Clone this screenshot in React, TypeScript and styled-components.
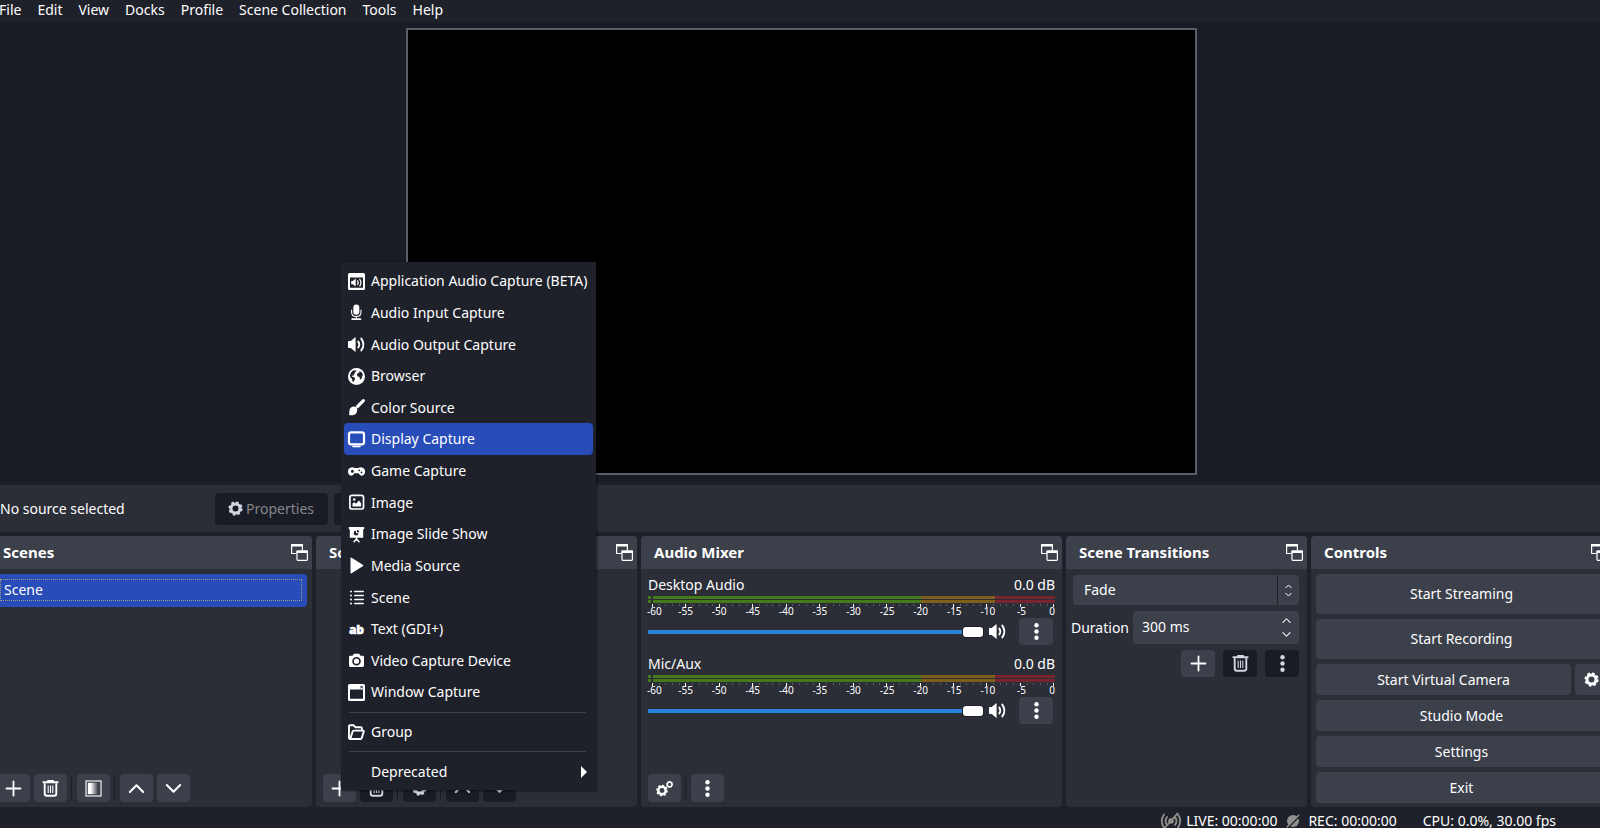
import React from "react";
import styled, { createGlobalStyle, css } from "styled-components";

const color = {
  window: "#1f212a",
  panel: "#2b2d37",
  raised: "#3c404b",
  sunken: "#191b25",
  accent: "#284cb8",
  slider: "#2a82da",
  text: "#fefefe",
  muted: "#86868a",
  outline: "#5b5d69",
};

const GlobalStyle = createGlobalStyle`
  *, *::before, *::after { box-sizing: border-box; }
  body {
    margin: 0;
    overflow: hidden;
    background: ${color.window};
    color: ${color.text};
    font-family: "Noto Sans", "Open Sans", sans-serif;
    font-size: 14px;
    line-height: 20px;
  }
  button, input, select { font: inherit; color: inherit; border: 0; margin: 0; padding: 0; }
  ul { list-style: none; margin: 0; padding: 0; }
  h2, p { margin: 0; }
`;

/* ---------- icons ---------- */

const Glyph = styled.svg<{ $size?: number }>`
  display: block;
  flex: none;
  width: ${(p) => p.$size ?? 17}px;
  height: ${(p) => p.$size ?? 17}px;
  overflow: visible;
`;

type IconProps = { size?: number; tint?: string };

const Icon = ({ size, tint = "#fff", children }: IconProps & { children: React.ReactNode }) => (
  <Glyph $size={size} viewBox="0 0 17 17" fill={tint} stroke={tint} strokeWidth="0" aria-hidden="true">
    {children}
  </Glyph>
);

const Line = ({ d, w = 2 }: { d: string; w?: number }) => (
  <path d={d} fill="none" strokeWidth={w} strokeLinecap="round" strokeLinejoin="round" />
);

const Cog = ({ x, y, r }: { x: number; y: number; r: number }) => (
  <g fill="none">
    <circle cx={x} cy={y} r={r * 0.64} strokeWidth={r * 0.42} />
    <circle cx={x} cy={y} r={r * 0.88} strokeWidth={r * 0.26} pathLength={16} strokeDasharray="1.1 0.9" />
  </g>
);

const GearIcon = (p: IconProps) => <Icon {...p}><Cog x={8.5} y={8.5} r={8} /></Icon>;
const GearsIcon = (p: IconProps) => (
  <Icon {...p}>
    <Cog x={6} y={10.5} r={5.8} />
    <Cog x={13.6} y={4.4} r={3.6} />
  </Icon>
);
const PlusIcon = (p: IconProps) => <Icon {...p}><Line d="M8.500 1.500v14M1.500 8.500h14" w={1.8} /></Icon>;
const UpIcon = (p: IconProps) => <Icon {...p}><Line d="M1.800 12 8.500 5.200 15.200 12" w={2} /></Icon>;
const DownIcon = (p: IconProps) => <Icon {...p}><Line d="M1.800 5 8.500 11.800 15.200 5" w={2} /></Icon>;
const DotsIcon = (p: IconProps) => (
  <Icon {...p}>
    <circle cx="8.500" cy="2.200" r="2.200" />
    <circle cx="8.500" cy="8.500" r="2.200" />
    <circle cx="8.500" cy="14.800" r="2.200" />
  </Icon>
);
const TrashIcon = (p: IconProps) => (
  <Icon {...p}>
    <rect x="0.500" y="1.200" width="16" height="2" rx="0.600" />
    <rect x="5" y="0" width="7" height="2" rx="0.800" />
    <Line d="M2.700 4v9.500q0 2.300 2.300 2.300h7q2.300 0 2.300-2.300V4" w={1.900} />
    <path d="M6.200 5.500v7.500M8.500 5.500v7.500M10.800 5.500v7.500" fill="none" strokeWidth="1.100" />
  </Icon>
);
const FadeIcon = (p: IconProps) => (
  <Icon {...p}>
    <defs>
      <linearGradient id="fade">
        <stop offset="0" stopColor="#fff" />
        <stop offset="0.250" stopColor="#fff" />
        <stop offset="0.900" stopColor="#3c404b" />
      </linearGradient>
    </defs>
    <rect x="1" y="1" width="15" height="15" fill="none" strokeWidth="1.100" />
    <rect x="2.800" y="2.800" width="11.400" height="11.400" fill="url(#fade)" />
  </Icon>
);
const PopOutIcon = (p: IconProps) => (
  <Icon {...p}>
    <path d="M5.500 9.500H1.200q-.6 0-.6-.6V1.200h10.800v5" fill="none" strokeWidth="1.200" />
    <rect x="0" y="0" width="12" height="2.400" rx="0.500" />
    <rect x="6" y="7.200" width="10.400" height="9.200" rx="0.800" fill="none" strokeWidth="1.200" />
    <rect x="5.400" y="6.600" width="11.600" height="2.400" rx="0.500" />
  </Icon>
);
const VolumeIcon = (p: IconProps) => (
  <Icon {...p}>
    <path d="M0 5.800q0-.8.800-.8h1.900L7.600.9v15.200L2.700 12H.8q-.8 0-.8-.8z" />
    <Line d="M10.300 5.600q2 2.900 0 5.800M13.300 2.600q4.200 5.900 0 11.800" w={1.900} />
  </Icon>
);
const AppAudioIcon = () => (
  <Icon>
    <path fillRule="evenodd" d="M1.500 0h14q1.500 0 1.500 1.500v14q0 1.500-1.500 1.500h-14Q0 17 0 15.500v-14Q0 0 1.500 0zM2 4.500v10.300h13V4.500z" />
    <path d="M3.200 8h1.600l2.900-2.400v8L4.800 11.300H3.200z" />
    <Line d="M9.600 7.800q1.200 1.800 0 3.700M11.800 6.300q2.300 3.300 0 6.600" w={1.200} />
  </Icon>
);
const MicIcon = () => (
  <Icon>
    <rect x="5.300" y="0.400" width="6" height="10.400" rx="3" />
    <Line d="M3.600 6v2.200q0 4.300 4.700 4.300T13 8.200V6M8.300 12.500v2" w={1.100} />
    <rect x="3.300" y="14.200" width="10" height="1.900" rx="0.800" />
  </Icon>
);
const GlobeIcon = () => (
  <Icon>
    <circle cx="8.500" cy="8.500" r="8.500" />
    <path
      fill={color.window}
      d="M5 2.600 8.700 2.200 8 3.600 6.800 4 7.300 5 5.700 6.200 6.200 7.500 4.200 7.400 3.800 8.600 6 9.200 7.300 10.500 6.300 12.200 5.600 14.200 4.300 12.800 4 10.700 2.300 9.300 2 7 3.200 4.300zM9.300 5.600 11.500 4.600 11.200 3 13.600 4.200 15 6.800 14.300 7.900 13.800 10 12.600 11.800 11.700 10.600 11.600 9 9.800 8.600 9 7z"
    />
  </Icon>
);
const BrushIcon = () => (
  <Icon>
    <Line d="M9.400 7.600 15.400 1.600" w={3.200} />
    <path d="M5.300 7.600q3.900 0 4 3.700-.5 4.400-4.700 4.900-2 .2-3.600-.2.300-.9.300-3.400.3-4.600 4-5z" />
  </Icon>
);
const DisplayIcon = () => (
  <Icon>
    <rect x="1" y="1.400" width="15" height="12" rx="2.200" fill="none" strokeWidth="2.200" />
    <rect x="4.200" y="14.800" width="8.600" height="1.500" rx="0.700" />
  </Icon>
);
const GamepadIcon = () => (
  <Icon>
    <path
      fillRule="evenodd"
      d="M4.200 4.200q1.600 0 2.300.8h4q.7-.8 2.300-.8Q17 4.500 17 8.600t-3.400 4.100q-1.800 0-3-2.400H6.400q-1.200 2.400-3 2.400Q0 12.700 0 8.600t4.200-4.400zM4.400 6.800a1.500 1.500 0 1 0 0 3 1.500 1.500 0 0 0 0-3zM11.300 6.400a.9.9 0 1 0 0 1.800.9.9 0 0 0 0-1.800zM13.500 8.600a.9.900 0 1 0 0 1.800.9.900 0 0 0 0-1.800z"
    />
  </Icon>
);
const ImageIcon = () => (
  <Icon>
    <rect x="1.900" y="1.400" width="13.600" height="13.600" rx="2" fill="none" strokeWidth="1.700" />
    <circle cx="6.200" cy="5.500" r="1.200" />
    <path d="M4.500 12.400V9.600l1.900-1.300 1.600 1.500 2.900-3.300 2.200 2.800v3.100z" />
  </Icon>
);
const SlidesIcon = () => (
  <Icon>
    <path d="M.8 1h15.400v2.200h-1v8.600H1.800V3.200h-1z" />
    <path d="M8 4.600a2.500 2.500 0 1 0 2.600 2.700H8z" fill={color.window} />
    <path d="M9 3.900a2.200 2.200 0 0 1 2.300 2.300H9z" fill={color.window} />
    <Line d="M8.500 11.500v2.500M8.500 13 6 15.800M8.500 13l2.500 2.800" w={1.500} />
  </Icon>
);
const PlayIcon = () => (
  <Icon><path d="M2.500 1.400q0-1.200 1.100-.6l11.200 7q1 .7 0 1.400l-11.200 7q-1.100.6-1.100-.6z" /></Icon>
);
const ListIcon = () => (
  <Icon>
    {[2.5, 6.5, 10.5, 14.5].map((y) => (
      <React.Fragment key={y}>
        <circle cx="3" cy={y} r="1" />
        <rect x="6" y={y - 0.8} width="10" height="1.600" rx="0.800" />
      </React.Fragment>
    ))}
  </Icon>
);
const LettersIcon = () => (
  <Icon>
    <text x="8.500" y="12.500" textAnchor="middle" fontSize="12" fontWeight="800" fontFamily="Open Sans, sans-serif" strokeWidth="0.500">ab</text>
  </Icon>
);
const CameraIcon = () => (
  <Icon>
    <path
      fillRule="evenodd"
      d="M5.800 1.800h5.400l1.200 2h2.200q1.400 0 1.400 1.400v8.400q0 1.400-1.400 1.400H2.400Q1 15 1 13.600V5.200q0-1.400 1.400-1.400h2.200zM8.500 4.900a4.300 4.300 0 1 0 0 8.600 4.300 4.300 0 0 0 0-8.600z"
    />
    <circle cx="8.500" cy="9.200" r="2.600" />
  </Icon>
);
const WindowIcon = () => (
  <Icon>
    <path fillRule="evenodd" d="M1.500 0h14q1.500 0 1.500 1.500v14q0 1.500-1.500 1.500h-14Q0 17 0 15.500v-14Q0 0 1.500 0zM2 5.500v9.300h13V5.500z" />
    <path d="M12.300 1.800l2.600 2.600M14.900 1.800l-2.600 2.600" stroke={color.window} strokeWidth="1" />
  </Icon>
);
const FolderIcon = () => (
  <Icon>
    <Line d="M2.300 15q-1.300 0-1.300-1.300V2.500q0-1.300 1.300-1.300h3.200l1.800 2h5.400q1.200 0 1.200 1.300v1.400" w={1.900} />
    <Line d="M2.300 15 4.600 7.500q.3-.9 1.200-.9h9q1.300 0 .9 1.200l-1.900 6.100q-.3 1.100-1.500 1.100z" w={1.900} />
  </Icon>
);
const OffAirIcon = () => (
  <Glyph $size={20} viewBox="0 0 20 20" fill="none" stroke="#8f8f8c" strokeWidth="1.800" strokeLinecap="round" aria-hidden="true">
    <circle cx="10" cy="10" r="2.800" fill="#8f8f8c" strokeWidth="0" />
    <path d="M3 3.500q-4.500 6.500 0 13M17 3.500q4.500 6.500 0 13M6 6q-3 4 0 8M14 6q3 4 0 8M4.500 16 16.500 2.500" />
  </Glyph>
);
const NotRecordingIcon = () => (
  <Glyph $size={14} viewBox="0 0 14 14" aria-hidden="true">
    <circle cx="7" cy="7" r="6" fill="#8f8f8c" />
    <path d="M1.500 14 14 1.500" stroke={color.window} strokeWidth="1.800" />
    <path d="M.8 13.200 13.200.8" stroke="#8f8f8c" strokeWidth="1.500" />
  </Glyph>
);

/* ---------- shell ---------- */

/* The main window is a little wider than the screen on both sides. */
const Shell = styled.main`
  display: flex;
  flex-direction: column;
  height: 100vh;
  margin: 0 -12px 0 -10px;
  overflow: hidden;
`;

const MenuBar = styled.nav`
  display: flex;
  gap: 16px;
  height: 22px;
  padding-left: 9px;
`;

const MenuBarItem = styled.button`
  background: none;
  line-height: 20px;
  height: 20px;
`;

const Preview = styled.section`
  flex: 1;
  min-height: 0;
  display: flex;
  justify-content: center;
  padding: 6px 0 7px;
  background: ${color.sunken};
`;

const Canvas = styled.div`
  height: 100%;
  aspect-ratio: 791 / 447;
  background: #000;
  border: 2px solid ${color.outline};
`;

const ContextBar = styled.section`
  display: flex;
  align-items: center;
  gap: 6px;
  height: 47px;
  margin: 3px 0 4px;
  padding-left: 10px;
  background: ${color.panel};
`;

const ContextLabel = styled.p`
  width: 209px;
`;

const ContextButton = styled.button`
  display: flex;
  align-items: center;
  justify-content: center;
  gap: 3px;
  min-width: 92px;
  height: 32px;
  padding: 0 14px 0 13px;
  border-radius: 4px;
  background: ${color.sunken};
  color: ${color.muted};
`;

/* ---------- docks ---------- */

const Docks = styled.div`
  display: grid;
  grid-template-columns:
    minmax(0, 322fr) minmax(0, 321fr) minmax(0, 421fr) minmax(0, 241fr)
    minmax(0, 301fr);
  gap: 4px;
`;

const DockFrame = styled.section`
  position: relative;
  display: flex;
  flex-direction: column;
  border-radius: 4px;
  background: ${color.panel};
`;

const DockHeader = styled.header`
  display: flex;
  align-items: center;
  justify-content: space-between;
  height: 33px;
  padding: 0 4px 0 13px;
  border-radius: 4px 4px 0 0;
  background: ${color.raised};
`;

const DockTitle = styled.h2`
  padding-bottom: 2px;
  font-size: 15px;
  line-height: 20px;
  font-weight: 700;
`;

const BareButton = styled.button`
  display: flex;
  background: none;
`;

const DockBody = styled.div`
  flex: 1;
  padding: 5px 5px;
`;

const Toolbar = styled.div`
  display: flex;
  gap: 4px;
  padding: 0 7px 5px;
`;

const ToolButton = styled.button<{ $width?: number; $height?: number }>`
  display: flex;
  align-items: center;
  justify-content: center;
  flex: none;
  width: ${(p) => p.$width ?? 33}px;
  height: ${(p) => p.$height ?? 28}px;
  border-radius: 4px;
  background: ${color.raised};
  &:disabled { background: ${color.sunken}; }
`;

const Divider = styled.span`
  width: 1px;
  height: 22px;
  margin: 3px 1px 0 0;
  background: ${color.sunken};
`;

const Dock = ({ title, children }: { title: string; children: React.ReactNode }) => (
  <DockFrame>
    <DockHeader>
      <DockTitle>{title}</DockTitle>
      <BareButton type="button"><PopOutIcon /></BareButton>
    </DockHeader>
    {children}
  </DockFrame>
);

const SceneItem = styled.li`
  height: 33px;
  padding: 5px;
  border-radius: 4px;
  background: ${color.accent};
`;

const SceneName = styled.span`
  display: block;
  height: 22px;
  padding-left: 3px;
  border: 1px dotted #a39c80;
`;

/* ---------- mixer ---------- */

const MixerBody = styled.div`
  flex: 1;
  display: flex;
  flex-direction: column;
  gap: 10px;
  padding: 7px 7px 0;
`;

const ChannelHead = styled.div`
  display: flex;
  justify-content: space-between;
  height: 20px;
  line-height: 18px;
`;

const Meter = styled.div`
  display: grid;
  grid-template-columns: 3px 1fr;
  gap: 1px 2px;
  height: 8px;
  padding-bottom: 1px;
`;

const MeterPeak = styled.span`
  background: #467a18;
`;

const MeterBar = styled.span`
  background: linear-gradient(90deg, #467a18 66.7%, #7f601b 66.7% 85%, #77242f 85%);
`;

const Ticks = styled.div`
  display: flex;
  justify-content: space-between;
  height: 3px;
  padding-left: 4px;
`;

const Tick = styled.span<{ $major: boolean }>`
  width: 1px;
  height: ${(p) => (p.$major ? 3 : 2)}px;
  background: ${(p) => (p.$major ? "#fff" : "#5b5d66")};
`;

const Scale = styled.div`
  display: grid;
  grid-template-columns: minmax(0, 1fr) repeat(11, minmax(0, 2fr)) minmax(0, 1fr);
  height: 11px;
  padding-left: 4px;
  font-size: 10px;
  line-height: 8px;
  text-align: center;
`;

const ScaleMark = styled.span`
  &:first-child { margin-left: -5px; text-align: left; }
  &:last-child { text-align: right; }
`;

const ChannelControls = styled.div`
  display: flex;
  align-items: center;
  height: 27px;
  padding-right: 2px;
`;

const Fader = styled.input`
  flex: 1;
  min-width: 0;
  height: 10px;
  margin-right: 6px;
  appearance: none;
  background: linear-gradient(${color.slider}, ${color.slider}) center / 100% 4px no-repeat;
  border-radius: 2px;
  &::-webkit-slider-thumb {
    appearance: none;
    width: 20px;
    height: 10px;
    border-radius: 3px;
    background: #fff;
    box-shadow: 0 0 0 1px ${color.window};
  }
`;

const MuteButton = styled(BareButton)`
  margin-right: 13px;
`;

const marks = Array.from({ length: 13 }, (_, i) => i * 5 - 60);
const ticks = Array.from({ length: 61 }, (_, i) => i);

const Channel = ({ name, id }: { name: string; id: string }) => (
  <div>
    <ChannelHead>
      <label htmlFor={id}>{name}</label>
      <span>0.0 dB</span>
    </ChannelHead>
    <Meter>
      <MeterPeak /><MeterBar /><MeterPeak /><MeterBar />
    </Meter>
    <Ticks>{ticks.map((t) => <Tick key={t} $major={t % 5 === 0} />)}</Ticks>
    <Scale>{marks.map((m) => <ScaleMark key={m}>{m}</ScaleMark>)}</Scale>
    <ChannelControls>
      <Fader id={id} type="range" min={0} max={100} defaultValue={100} />
      <MuteButton type="button"><VolumeIcon size={17} /></MuteButton>
      <ToolButton type="button" $width={34} $height={27}><DotsIcon /></ToolButton>
    </ChannelControls>
  </div>
);

/* ---------- transitions ---------- */

const TransitionBody = styled.div`
  flex: 1;
  display: flex;
  flex-direction: column;
  gap: 6px;
  padding: 6px 8px 0 5px;
`;

const field = css`
  border-radius: 4px;
  background: ${color.raised};
`;

const SelectBox = styled.div`
  ${field}
  display: grid;
  height: 30px;
  margin-left: 2px;
  > * { grid-area: 1 / 1; }
`;

const Select = styled.select`
  appearance: none;
  background: none;
  padding-left: 11px;
  option { background: ${color.raised}; }
`;

const SelectArrows = styled.span`
  justify-self: end;
  display: flex;
  flex-direction: column;
  align-items: center;
  justify-content: center;
  gap: 1px;
  width: 22px;
  border-left: 1px solid ${color.window};
  pointer-events: none;
`;

const DurationRow = styled.div`
  display: flex;
  align-items: center;
  gap: 4px;
`;

const SpinBox = styled.div`
  ${field}
  flex: 1;
  min-width: 0;
  display: flex;
  height: 33px;
`;

const SpinInput = styled.input`
  flex: 1;
  min-width: 0;
  padding: 0 0 2px 9px;
  background: none;
`;

const SpinButtons = styled.div`
  display: flex;
  flex-direction: column;
  align-items: center;
  justify-content: space-between;
  width: 26px;
  padding: 5px 0;
`;

const ButtonsRight = styled.div`
  display: flex;
  justify-content: flex-end;
  gap: 8px;
`;

/* ---------- controls ---------- */

const ControlsBody = styled.div`
  flex: 1;
  display: flex;
  flex-direction: column;
  gap: 5px;
  padding: 5px 5px 4px;
`;

const ControlRow = styled.div`
  display: flex;
  gap: 4px;
`;

const ControlButton = styled.button<{ $tall?: boolean }>`
  flex: 1 0 auto;
  height: ${(p) => (p.$tall ? 40 : 31)}px;
  border-radius: 4px;
  background: ${color.raised};
`;

/* ---------- add-source menu ---------- */

const Menu = styled.ul`
  position: absolute;
  left: 25px;
  bottom: 17px;
  z-index: 2;
  display: grid;
  grid-template-columns: minmax(0, 1fr);
  grid-template-rows: repeat(14, 1fr) auto 1fr auto 1fr;
  width: 255px;
  height: 528px;
  padding: 3px;
  background: ${color.window};
  box-shadow: 1px 1px 2px rgba(0, 0, 0, 0.5);
`;

const MenuItem = styled.button<{ $active?: boolean }>`
  display: flex;
  align-items: center;
  gap: 6px;
  width: 100%;
  height: 100%;
  padding: 1px 6px 0 4px;
  border-radius: 4px;
  background: ${(p) => (p.$active ? color.accent : "none")};
  text-align: left;
`;

const MenuText = styled.span<{ $indent?: boolean }>`
  flex: 1;
  white-space: nowrap;
  padding-left: ${(p) => (p.$indent ? 23 : 0)}px;
`;

const MenuRule = styled.li`
  height: 1px;
  margin: 4px 7px 3px 5px;
  background: ${color.raised};
`;

const sources: [string, React.FC<IconProps>][] = [
  ["Application Audio Capture (BETA)", AppAudioIcon],
  ["Audio Input Capture", MicIcon],
  ["Audio Output Capture", VolumeIcon],
  ["Browser", GlobeIcon],
  ["Color Source", BrushIcon],
  ["Display Capture", DisplayIcon],
  ["Game Capture", GamepadIcon],
  ["Image", ImageIcon],
  ["Image Slide Show", SlidesIcon],
  ["Media Source", PlayIcon],
  ["Scene", ListIcon],
  ["Text (GDI+)", LettersIcon],
  ["Video Capture Device", CameraIcon],
  ["Window Capture", WindowIcon],
];

const AddSourceMenu = () => (
  <Menu>
    {sources.map(([name, Pic]) => (
      <li key={name}>
        <MenuItem type="button" $active={name === "Display Capture"}>
          <Pic />
          <MenuText>{name}</MenuText>
        </MenuItem>
      </li>
    ))}
    <MenuRule />
    <li><MenuItem type="button"><FolderIcon /><MenuText>Group</MenuText></MenuItem></li>
    <MenuRule />
    <li>
      <MenuItem type="button">
        <MenuText $indent>Deprecated</MenuText>
        <Glyph $size={12} viewBox="0 0 12 12" aria-hidden="true">
          <path d="M6 0 12 6 6 12z" fill="#fff" />
        </Glyph>
      </MenuItem>
    </li>
  </Menu>
);

/* ---------- status bar ---------- */

const StatusBar = styled.footer`
  display: flex;
  justify-content: flex-end;
  height: 21px;
  padding: 4px 56px 0 0;
`;

const StatusItem = styled.span<{ $gap: number; $after?: number }>`
  display: flex;
  align-items: center;
  gap: ${(p) => p.$gap}px;
  height: 20px;
  margin-right: ${(p) => p.$after ?? 0}px;
  white-space: nowrap;
`;

const menuNames = ["File", "Edit", "View", "Docks", "Profile", "Scene Collection", "Tools", "Help"];

export default function App() {
  return (
    <>
      <GlobalStyle />
      <Shell>
        <MenuBar>
          {menuNames.map((m) => <MenuBarItem key={m} type="button">{m}</MenuBarItem>)}
        </MenuBar>

        <Preview><Canvas /></Preview>

        <ContextBar>
          <ContextLabel>No source selected</ContextLabel>
          <ContextButton type="button" disabled>
            <GearIcon size={15} tint="#d3d5e0" />
            Properties
          </ContextButton>
          <ContextButton type="button" disabled />
        </ContextBar>

        <Docks>
          <Dock title="Scenes">
            <DockBody>
              <ul>
                <SceneItem><SceneName>Scene</SceneName></SceneItem>
              </ul>
            </DockBody>
            <Toolbar>
              <ToolButton type="button"><PlusIcon size={17} /></ToolButton>
              <ToolButton type="button"><TrashIcon size={17} /></ToolButton>
              <Divider />
              <ToolButton type="button"><FadeIcon size={17} /></ToolButton>
              <Divider />
              <ToolButton type="button"><UpIcon size={17} /></ToolButton>
              <ToolButton type="button"><DownIcon size={17} /></ToolButton>
            </Toolbar>
          </Dock>

          <Dock title="Sources">
            <DockBody />
            <Toolbar>
              <ToolButton type="button"><PlusIcon size={17} /></ToolButton>
              <ToolButton type="button" disabled><TrashIcon size={17} tint="#d3d5e0" /></ToolButton>
              <Divider />
              <ToolButton type="button" disabled><GearIcon size={15} tint="#d3d5e0" /></ToolButton>
              <Divider />
              <ToolButton type="button" disabled><UpIcon tint="#d3d5e0" /></ToolButton>
              <ToolButton type="button" disabled><DownIcon tint="#d3d5e0" /></ToolButton>
            </Toolbar>
            <AddSourceMenu />
          </Dock>

          <Dock title="Audio Mixer">
            <MixerBody>
              <Channel name="Desktop Audio" id="desktop-audio" />
              <Channel name="Mic/Aux" id="mic-aux" />
            </MixerBody>
            <Toolbar>
              <ToolButton type="button"><GearsIcon size={17} /></ToolButton>
              <Divider />
              <ToolButton type="button"><DotsIcon size={17} /></ToolButton>
            </Toolbar>
          </Dock>

          <Dock title="Scene Transitions">
            <TransitionBody>
              <SelectBox>
                <Select defaultValue="Fade" aria-label="Scene Transitions"><option>Fade</option></Select>
                <SelectArrows>
                  <Glyph $size={7} viewBox="0 0 7 7" fill="none" stroke="#fff" aria-hidden="true">
                    <path d="M.5 5 3.500 2l3 3" />
                  </Glyph>
                  <Glyph $size={7} viewBox="0 0 7 7" fill="none" stroke="#fff" aria-hidden="true">
                    <path d="M.5 2 3.500 5l3-3" />
                  </Glyph>
                </SelectArrows>
              </SelectBox>
              <DurationRow>
                <label htmlFor="duration">Duration</label>
                <SpinBox>
                  <SpinInput id="duration" defaultValue="300 ms" />
                  <SpinButtons>
                    <BareButton type="button"><UpIcon size={9} /></BareButton>
                    <BareButton type="button"><DownIcon size={9} /></BareButton>
                  </SpinButtons>
                </SpinBox>
              </DurationRow>
              <ButtonsRight>
                <ToolButton type="button" $width={34} $height={27}><PlusIcon size={17} /></ToolButton>
                <ToolButton type="button" $width={34} $height={27} disabled><TrashIcon tint="#d3d5e0" /></ToolButton>
                <ToolButton type="button" $width={34} $height={27} disabled><DotsIcon tint="#d3d5e0" /></ToolButton>
              </ButtonsRight>
            </TransitionBody>
          </Dock>

          <Dock title="Controls">
            <ControlsBody>
              <ControlRow><ControlButton type="button" $tall>Start Streaming</ControlButton></ControlRow>
              <ControlRow><ControlButton type="button" $tall>Start Recording</ControlButton></ControlRow>
              <ControlRow>
                <ControlButton type="button">Start Virtual Camera</ControlButton>
                <ToolButton type="button" $width={32} $height={31}><GearIcon size={15} /></ToolButton>
              </ControlRow>
              <ControlRow><ControlButton type="button">Studio Mode</ControlButton></ControlRow>
              <ControlRow><ControlButton type="button">Settings</ControlButton></ControlRow>
              <ControlRow><ControlButton type="button">Exit</ControlButton></ControlRow>
            </ControlsBody>
          </Dock>
        </Docks>

        <StatusBar>
          <StatusItem $gap={5} $after={9}><OffAirIcon />LIVE: 00:00:00</StatusItem>
          <StatusItem $gap={8} $after={26}><NotRecordingIcon />REC: 00:00:00</StatusItem>
          <StatusItem $gap={0}>CPU: 0.0%, 30.00 fps</StatusItem>
        </StatusBar>
      </Shell>
    </>
  );
}
